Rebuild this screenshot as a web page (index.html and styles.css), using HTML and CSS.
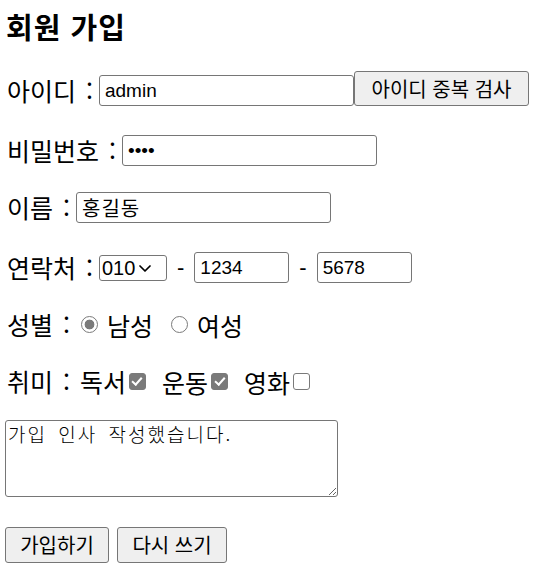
FILE: index.html
```html
<!DOCTYPE html>
<html lang="ko">
<head>
<meta charset="utf-8">
<title>회원 가입</title>
<link rel="stylesheet" href="styles.css">
</head>
<body>
<form class="page">
  <h2 class="title">회원 가입</h2>

  <div class="row">
    <span class="label">아이디 :</span>
    <input class="field field--wide field--gap" type="text" value="admin">
    <button class="btn btn--check" type="button">아이디 중복 검사</button>
  </div>

  <div class="row row--loose">
    <span class="label">비밀번호 :</span>
    <input class="field field--wide field--gap" type="password" value="1234">
  </div>

  <div class="row">
    <span class="label">이름 :</span>
    <input class="field field--wide field--gap field--hangul" type="text" value="홍길동">
  </div>

  <div class="row row--loose">
    <span class="label">연락처 :</span>
    <span class="select-wrap">
      <select class="phone-select">
        <option>010</option>
        <option>011</option>
      </select>
      <svg class="chevron" width="12" height="7" viewBox="0 0 12 7" aria-hidden="true">
        <polyline points="1,1 6,6 11,1" fill="none" stroke="#000" stroke-width="1.7" stroke-linecap="round" stroke-linejoin="round"/>
      </svg>
    </span>
    <span class="dash">-</span>
    <input class="field field--phone" type="text" value="1234">
    <span class="dash">-</span>
    <input class="field field--phone" type="text" value="5678">
  </div>

  <div class="row">
    <span class="label">성별 :</span>
    <input class="radio radio--first" type="radio" name="gender" checked>
    <span class="option">남성</span>
    <input class="radio" type="radio" name="gender">
    <span class="option">여성</span>
  </div>

  <div class="row">
    <span class="label">취미 : 독서</span>
    <input class="check" type="checkbox" checked>
    <span class="option option--spaced">운동</span>
    <input class="check" type="checkbox" checked>
    <span class="option option--spaced">영화</span>
    <input class="check" type="checkbox">
  </div>

  <textarea class="greeting">가입 인사 작성했습니다.</textarea>

  <div class="actions">
    <button class="btn btn--submit" type="submit">가입하기</button>
    <button class="btn btn--reset" type="reset">다시 쓰기</button>
  </div>
</form>
</body>
</html>
```

FILE: styles.css
```css
html, body {
  margin: 0;
  padding: 0;
  background: #ffffff;
  color: #000000;
}

body {
  font-family: "Noto Sans CJK KR", "Noto Sans", sans-serif;
}

.page {
  display: flex;
  flex-direction: column;
  align-items: flex-start;
  padding: 8px 5px 0 5px;
}

.title {
  margin: 0 0 0 1px;
  height: 36px;
  line-height: 36px;
  font-size: 29px;
  font-weight: 700;
  letter-spacing: 1px;
}

.row {
  display: flex;
  align-items: center;
  height: 37px;
  margin-top: 20px;
  font-size: 25px;
  white-space: pre;
}

.title + .row {
  margin-top: 28px;
}

.row--loose {
  margin-top: 23px;
}

.label {
  margin-left: 2px;
  line-height: 37px;
  word-spacing: 3px;
}

.field {
  box-sizing: border-box;
  flex: none;
  height: 31px;
  margin: 0;
  padding: 1px 4px 1px 5px;
  border: 1px solid #767676;
  border-radius: 3px;
  background: #ffffff;
  color: #000000;
  font-family: "Liberation Sans", "Noto Sans CJK KR", sans-serif;
  font-size: 19px;
}

.field--wide {
  width: 255px;
}

.field--gap {
  margin-left: 6px;
}

.field--hangul {
  font-size: 20px;
  letter-spacing: 1px;
}

.field--phone {
  width: 95px;
}

.btn {
  box-sizing: border-box;
  flex: none;
  margin: 0;
  padding: 0 10px;
  border: 1px solid #767676;
  border-radius: 3px;
  background: #efefef;
  color: #000000;
  font-family: "Noto Sans CJK KR", sans-serif;
  font-size: 20px;
  line-height: 1;
}

.btn--check {
  width: 175px;
  height: 35px;
  margin-bottom: 4px;
}

.select-wrap {
  position: relative;
  display: flex;
  margin-left: 6px;
}

.phone-select {
  box-sizing: border-box;
  appearance: none;
  -webkit-appearance: none;
  width: 68px;
  height: 26px;
  margin: 0;
  padding: 0 0 0 2px;
  border: 1px solid #767676;
  border-radius: 3px;
  background: #ffffff;
  color: #000000;
  font-family: "Liberation Sans", sans-serif;
  font-size: 20px;
}

.chevron {
  position: absolute;
  right: 16px;
  top: 10px;
  pointer-events: none;
}

.dash {
  margin: 0 10px;
  font-family: "Liberation Sans", sans-serif;
  font-size: 22px;
}

.radio {
  flex: none;
  appearance: none;
  -webkit-appearance: none;
  box-sizing: border-box;
  width: 17px;
  height: 17px;
  margin: 0 9px 0 18px;
  border: 1.5px solid #7a7a7a;
  border-radius: 50%;
  background: #ffffff;
}

.radio:checked {
  background: radial-gradient(circle, #7a7a7a 0 4.6px, #ffffff 5.2px);
}

.radio--first {
  margin-left: 11px;
}

.check {
  flex: none;
  position: relative;
  appearance: none;
  -webkit-appearance: none;
  box-sizing: border-box;
  width: 17px;
  height: 17px;
  margin: 0 0 0 3px;
  border: 1.5px solid #7a7a7a;
  border-radius: 3px;
  background: #ffffff;
}

.check:checked {
  background: #7a7a7a;
}

.check:checked::after {
  content: "";
  position: absolute;
  left: 4.5px;
  top: 1px;
  width: 3.5px;
  height: 8px;
  border: solid #ffffff;
  border-width: 0 2.4px 2.4px 0;
  transform: rotate(42deg);
}

.option--spaced {
  margin-left: 16px;
}

.greeting {
  box-sizing: border-box;
  width: 333px;
  height: 77px;
  margin: 20px 0 0 0;
  padding: 2px 2px;
  border: 1px solid #767676;
  border-radius: 3px;
  font-family: "Noto Sans CJK KR", monospace;
  font-size: 19px;
  font-weight: 300;
  letter-spacing: 2px;
  word-spacing: 4px;
  line-height: 1.2;
  color: #000000;
  resize: both;
}

.actions {
  display: flex;
  gap: 8px;
  margin-top: 30px;
}

.btn--submit {
  width: 104px;
  height: 36px;
}

.btn--reset {
  width: 110px;
  height: 36px;
}
```
